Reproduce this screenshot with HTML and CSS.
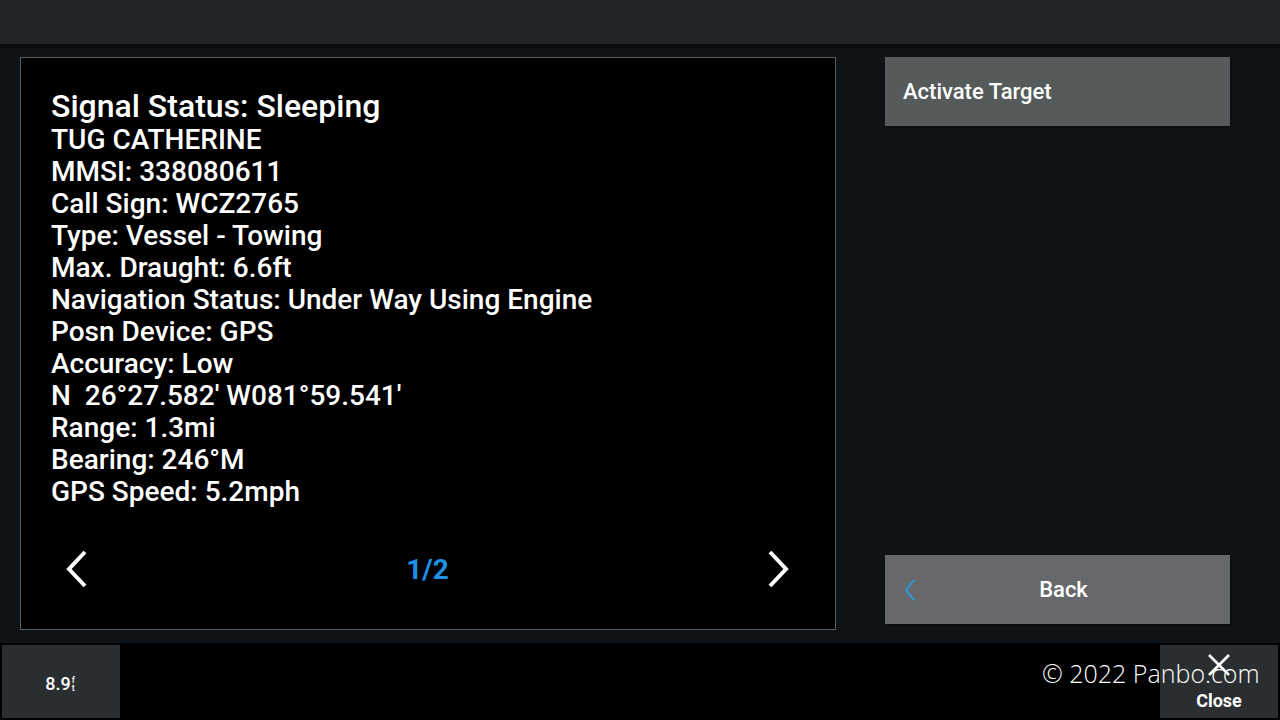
FILE: index.html
```html
<!DOCTYPE html>
<html lang="en">
<head>
    <meta charset="UTF-8">
    <title>Target Info</title>
    <link rel="stylesheet" href="styles.css">
</head>
<body>
    <div class="topbar"></div>

    <div class="main">
        <div class="info-panel">
            <div class="info-text">
                <div class="line title">Signal Status: Sleeping</div>
                <div class="line">TUG CATHERINE</div>
                <div class="line">MMSI: 338080611</div>
                <div class="line">Call Sign: WCZ2765</div>
                <div class="line">Type: Vessel - Towing</div>
                <div class="line">Max. Draught: 6.6ft</div>
                <div class="line">Navigation Status: Under Way Using Engine</div>
                <div class="line">Posn Device: GPS</div>
                <div class="line">Accuracy: Low</div>
                <div class="line">N&nbsp;&nbsp;26°27.582' W081°59.541'</div>
                <div class="line">Range: 1.3mi</div>
                <div class="line">Bearing: 246°M</div>
                <div class="line">GPS Speed: 5.2mph</div>
            </div>
            <div class="pager">
                <svg class="chev" width="24" height="38" viewBox="0 0 24 38"><polyline points="20,2 4,19 20,36" fill="none" stroke="#fff" stroke-width="4"/></svg>
                <span class="page-num">1/2</span>
                <svg class="chev" width="24" height="38" viewBox="0 0 24 38"><polyline points="4,2 20,19 4,36" fill="none" stroke="#fff" stroke-width="4"/></svg>
            </div>
        </div>

        <div class="side">
            <div class="btn btn-activate">Activate Target</div>
            <div class="btn btn-back">
                <svg class="back-chev" width="14" height="22" viewBox="0 0 14 22"><polyline points="11,1 3,11 11,21" fill="none" stroke="#2a9be0" stroke-width="2"/></svg>
                <span>Back</span>
            </div>
        </div>
    </div>

    <div class="bottombar">
        <div class="tile depth">8.9<span class="unit">f<br>t</span></div>
        <div class="tile close">
            <svg width="24" height="24" viewBox="0 0 24 24"><path d="M2 2 L22 22 M22 2 L2 22" stroke="#fff" stroke-width="2.6"/></svg>
            <span>Close</span>
        </div>
        <div class="watermark">© 2022 Panbo.com</div>
    </div>
</body>
</html>
```

FILE: styles.css
```css
* {
    margin: 0;
    padding: 0;
    box-sizing: border-box;
}
body {
    width: 1280px;
    height: 720px;
    overflow: hidden;
    background-color: #0d1316;
    font-family: Roboto, "Liberation Sans", sans-serif;
    color: #fff;
}
.topbar {
    height: 48px;
    background-color: #212529;
    border-bottom: 4px solid #0b0c0d;
}
.main {
    display: flex;
    height: 595px;
    padding: 9px 0 0 20px;
}
.info-panel {
    width: 816px;
    height: 573px;
    background-color: #000;
    border: 1px solid #5a5d5f;
    display: flex;
    flex-direction: column;
}
.info-text {
    padding: 31px 0 0 30px;
    height: 465px;
}
.line {
    font-size: 28px;
    font-weight: 500;
    line-height: 32px;
    white-space: nowrap;
}
.line.title {
    font-size: 32px;
    line-height: 35px;
}
.pager {
    display: flex;
    align-items: center;
    justify-content: space-between;
    padding: 0 45px 0 44px;
    height: 80px;
    margin-top: 6px;
}
.page-num {
    color: #1e90e6;
    font-size: 28px;
    font-weight: 700;
}
.side {
    margin-left: 49px;
    width: 345px;
    display: flex;
    flex-direction: column;
    justify-content: space-between;
    height: 567px;
}
.btn {
    height: 69px;
    display: flex;
    align-items: center;
    font-size: 22px;
    font-weight: 500;
    box-shadow: 1px 1px 2px rgba(0, 0, 0, 0.6);
}
.btn-activate {
    background-color: #555a5a;
    padding-left: 18px;
}
.btn-back {
    background-color: #66686b;
    padding-left: 18px;
}
.btn-back span {
    flex: 1;
    text-align: center;
    margin-right: 20px;
}
.bottombar {
    background-color: #000;
    height: 77px;
    display: flex;
    justify-content: space-between;
    padding: 2px;
    position: relative;
}
.tile {
    width: 118px;
    height: 73px;
    background-color: #2a2e30;
}
.depth {
    display: flex;
    align-items: center;
    justify-content: center;
    font-size: 18px;
    font-weight: 500;
    padding: 4px 2px 0 0;
}
.unit {
    font-size: 9px;
    line-height: 8px;
    margin-left: 1px;
}
.close {
    display: flex;
    flex-direction: column;
    align-items: center;
    padding-top: 8px;
}
.close span {
    font-size: 18px;
    font-weight: 700;
    margin-top: 13px;
}
.watermark {
    position: absolute;
    left: 1042px;
    top: 13px;
    font-family: "Open Sans", "Noto Sans", sans-serif;
    font-weight: 300;
    font-size: 25px;
    color: #fff;
    white-space: nowrap;
}
```
